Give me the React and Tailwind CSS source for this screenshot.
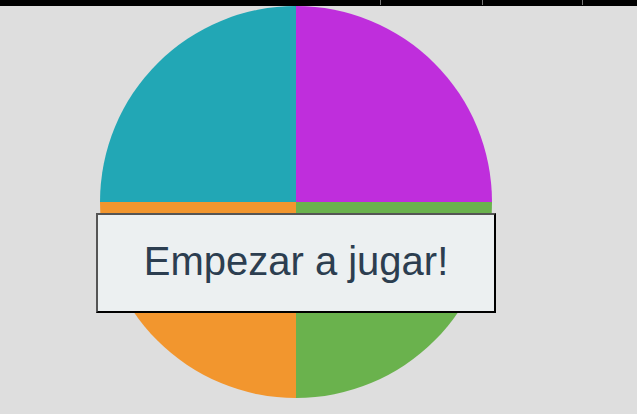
import React from "react";

const Quadrant = ({ color, corner }) => <div className={`w-[196px] h-[196px] ${color} ${corner}`} />;

const Tick = () => <div className="w-px h-[5px] bg-[#777]" />;

const App = () => {
  return (
    <div className="w-[637px] h-[414px] bg-[#dedede] overflow-hidden" style={{ fontFamily: "'Liberation Sans', Arial, sans-serif" }}>
      {/* top bar */}
      <div className="flex h-[6px] bg-black pl-[380px] gap-[101px]">
        <Tick />
        <Tick />
        <div className="-ml-[2px]">
          <Tick />
        </div>
      </div>

      <div className="relative ml-[100px] w-[392px] h-[392px]">
        <div className="grid grid-cols-2">
          <Quadrant color="bg-[#22a7b5]" corner="rounded-tl-full" />
          <Quadrant color="bg-[#bf2edc]" corner="rounded-tr-full" />
          <Quadrant color="bg-[#f2962e]" corner="rounded-bl-full" />
          <Quadrant color="bg-[#6ab24d]" corner="rounded-br-full" />
        </div>
        {/* start button sits over the wheel */}
        <button className="absolute left-[-4px] top-[207px] w-[400px] h-[100px] bg-[#ecf0f1] border-2 border-t-[#555] border-l-[#555] border-b-black border-r-black text-[40px] text-[#2c3e50] flex items-center justify-center pb-[4px]">
          Empezar a jugar!
        </button>
      </div>
    </div>
  );
};

export default App;
